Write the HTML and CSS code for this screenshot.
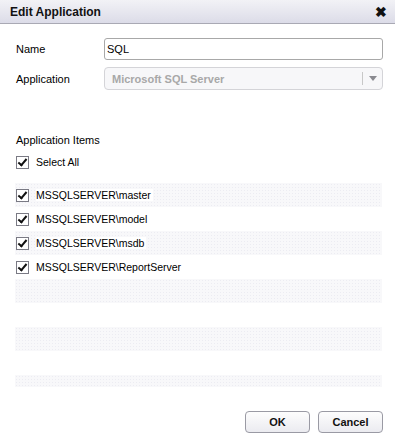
FILE: index.html
```
<!DOCTYPE html>
<html>
<head>
	<meta charset="UTF-8">
	<title>Edit Application</title>
	<link rel="stylesheet" href="styles.css">
</head>
<body>

	<div class="dialog">

		<div class="titlebar">
			<span class="title">Edit Application</span>
			<span class="close">&#x2716;</span>
		</div>

		<div class="content">

			<label class="field">
				<span class="field-label">Name</span>
				<input type="text" class="text-input" value="SQL">
			</label>

			<div class="field">
				<span class="field-label">Application</span>
				<div class="select disabled">
					<span class="select-value">Microsoft SQL Server</span>
					<span class="select-arrow"></span>
				</div>
			</div>

			<div class="items-title">Application Items</div>

			<div class="check-row select-all">
				<span class="box"></span>
				<span class="check-text">Select All</span>
			</div>

			<div class="items-list">
				<div class="item stripe"><span class="check-row"><span class="box"></span><span class="check-text">MSSQLSERVER\master</span></span></div>
				<div class="item"><span class="check-row"><span class="box"></span><span class="check-text">MSSQLSERVER\model</span></span></div>
				<div class="item stripe"><span class="check-row"><span class="box"></span><span class="check-text">MSSQLSERVER\msdb</span></span></div>
				<div class="item"><span class="check-row"><span class="box"></span><span class="check-text">MSSQLSERVER\ReportServer</span></span></div>
				<div class="item stripe"></div>
				<div class="item"></div>
				<div class="item stripe"></div>
				<div class="item"></div>
				<div class="item stripe short"></div>
			</div>

			<div class="buttons">
				<button class="btn">OK</button>
				<button class="btn">Cancel</button>
			</div>

		</div>
	</div>

</body>
</html>
```

FILE: styles.css
```
html, body {
	margin: 0;
	padding: 0;
	background: #fff;
}

body {
	font-family: "Liberation Sans", Arial, sans-serif;
	font-size: 11px;
	color: #000;
}

.dialog {
	width: 395px;
	height: 441px;
	overflow: hidden;
}

.titlebar {
	height: 23px;
	display: flex;
	align-items: center;
	justify-content: space-between;
	padding: 0 8px 0 10px;
	background: linear-gradient(#f2f2f6, #dcdce8);
	border-bottom: 1px solid #a9a9b4;
}

.title {
	font-weight: bold;
	font-size: 12px;
	color: #111;
}

.close {
	font-size: 14px;
	color: #111;
	font-weight: bold;
}

.content {
	padding: 14px 12px 0 16px;
}

.field {
	display: flex;
	align-items: center;
	margin-bottom: 7px;
}

.field-label {
	width: 88px;
}

.text-input {
	flex: 1;
	height: 22px;
	box-sizing: border-box;
	border: 1px solid #a8a8a8;
	border-radius: 3px;
	padding: 0 2px;
	font-family: inherit;
	font-size: 11px;
	margin: 0;
	outline: 0;
}

.select {
	flex: 1;
	height: 23px;
	box-sizing: border-box;
	border: 1px solid #d4d4d8;
	border-radius: 4px;
	background: #f7f7f9;
	display: flex;
	align-items: center;
}

.select-value {
	flex: 1;
	padding-left: 7px;
	font-weight: bold;
	color: #a8a8a8;
}

.select-arrow {
	width: 19px;
	height: 13px;
	border-left: 1px solid #c8c8c8;
	position: relative;
}

.select-arrow:after {
	content: "";
	position: absolute;
	left: 6px;
	top: 4px;
	border-left: 4px solid transparent;
	border-right: 4px solid transparent;
	border-top: 5px solid #8a8a90;
}

.items-title {
	margin-top: 44px;
	height: 14px;
}

.check-row {
	display: flex;
	align-items: center;
	gap: 7px;
	font-size: 10.5px;
}

.select-all {
	margin-top: 7px;
	height: 14px;
}

.box {
	width: 11px;
	height: 11px;
	border: 1px solid #7a7a84;
	background: #fff;
	position: relative;
	flex: none;
}

.box:after {
	content: "";
	position: absolute;
	left: 3px;
	top: 0;
	width: 3px;
	height: 7px;
	border-right: 2px solid #111;
	border-bottom: 2px solid #111;
	transform: rotate(40deg);
}

.check-text {
	background: #fff;
	padding-right: 2px;
}

.items-list {
	margin: 14px 1px 0 -1px;
}

.item {
	height: 24px;
	display: flex;
	align-items: center;
	padding-left: 1px;
}

.stripe {
	background-color: #f8f8fa;
	background-image: radial-gradient(#ececf2 1px, transparent 1px);
	background-size: 3px 3px;
}

.short {
	height: 12px;
}

.buttons {
	display: flex;
	justify-content: flex-end;
	gap: 8px;
	margin-top: 24px;
}

.btn {
	width: 65px;
	height: 22px;
	border: 1px solid #9a9aa4;
	border-radius: 4px;
	background: linear-gradient(#fdfdfd, #ebebf0);
	font-family: inherit;
	font-size: 11px;
	font-weight: bold;
	color: #111;
	margin: 0;
	padding: 0;
}
```
